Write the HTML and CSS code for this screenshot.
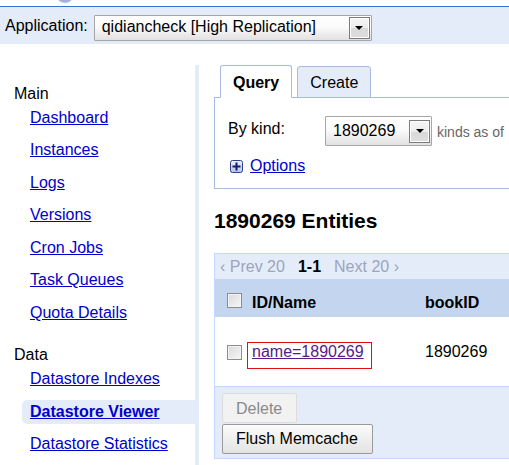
FILE: index.html
```html
<!DOCTYPE html>
<html>
<head>
<meta charset="utf-8">
<title>Datastore Viewer</title>
<link rel="stylesheet" href="styles.css">
</head>
<body>
<div class="topstrip">
  <svg class="logo" width="18" height="6" viewBox="0 0 18 6"><defs><radialGradient id="lg" cx="0.5" cy="0.2" r="0.7"><stop offset="0" stop-color="#4a5fae"/><stop offset="1" stop-color="#aab6dc"/></radialGradient></defs><ellipse cx="8" cy="-4" rx="8" ry="7" fill="url(#lg)"/></svg>
</div>
<div class="appbar">
  <span class="app-label">Application:</span>
  <div class="select app-select">
    <span class="select-text">qidiancheck [High Replication]</span>
    <span class="select-btn"><span class="arrow"></span></span>
  </div>
</div>
<div class="layout">
  <nav class="sidebar">
    <div class="nav-label">Main</div>
    <div class="nav-item"><div class="nav-box"><a href="#">Dashboard</a></div></div>
    <div class="nav-item"><div class="nav-box"><a href="#">Instances</a></div></div>
    <div class="nav-item"><div class="nav-box"><a href="#">Logs</a></div></div>
    <div class="nav-item"><div class="nav-box"><a href="#">Versions</a></div></div>
    <div class="nav-item"><div class="nav-box"><a href="#">Cron Jobs</a></div></div>
    <div class="nav-item"><div class="nav-box"><a href="#">Task Queues</a></div></div>
    <div class="nav-item"><div class="nav-box"><a href="#">Quota Details</a></div></div>
    <div class="nav-label nav-label-gap">Data</div>
    <div class="nav-item"><div class="nav-box"><a href="#">Datastore Indexes</a></div></div>
    <div class="nav-item"><div class="nav-box active"><a href="#">Datastore Viewer</a></div></div>
    <div class="nav-item"><div class="nav-box"><a href="#">Datastore Statistics</a></div></div>
  </nav>
  <main class="main">
    <div class="main-inner">
      <div class="tabs">
        <div class="tab tab-active">Query</div>
        <div class="tab">Create</div>
      </div>
      <div class="panel">
        <div class="kind-row">
          <span class="kind-label">By kind:</span>
          <div class="select kind-select">
            <span class="select-text">1890269</span>
            <span class="select-btn"><span class="arrow"></span></span>
          </div>
          <span class="kinds-note">kinds as of</span>
        </div>
        <div class="options-row">
          <svg class="plus" width="13" height="13" viewBox="0 0 13 13"><defs><linearGradient id="pg" x1="0" y1="0" x2="0" y2="1"><stop offset="0" stop-color="#eef0fb"/><stop offset="1" stop-color="#b9c2e6"/></linearGradient></defs><rect x="0.5" y="0.5" width="12" height="12" rx="2" fill="url(#pg)" stroke="#2b3f8c"/><path d="M2.5 6.5h8M6.5 2.5v8" stroke="#101f66" stroke-width="2"/></svg>
          <a href="#">Options</a>
        </div>
      </div>
      <h2 class="heading">1890269 Entities</h2>
      <div class="results">
        <div class="pager">
          <span>‹ Prev 20</span>
          <span class="pager-current">1-1</span>
          <span>Next 20 ›</span>
        </div>
        <div class="row row-head">
          <div class="cell-check"><span class="checkbox"></span></div>
          <div class="cell-name"><span class="head-text">ID/Name</span></div>
          <div class="cell-book"><span class="head-text">bookID</span></div>
        </div>
        <div class="row row-data">
          <div class="cell-check"><span class="checkbox checkbox-data"></span></div>
          <div class="cell-name"><span class="annot"><a class="visited" href="#">name=1890269</a></span></div>
          <div class="cell-book"><span class="data-text">1890269</span></div>
        </div>
        <div class="footer">
          <button class="btn btn-disabled" type="button">Delete</button>
          <button class="btn" type="button">Flush Memcache</button>
        </div>
      </div>
    </div>
  </main>
</div>
</body>
</html>
```

FILE: styles.css
```css
html, body {
  margin: 0;
  padding: 0;
}
body {
  width: 509px;
  height: 465px;
  overflow: hidden;
  font-family: "Liberation Sans", Arial, sans-serif;
  font-size: 16px;
  color: #000;
  background: #fff;
}
a {
  color: #0000cc;
  text-decoration: underline;
}

.topstrip {
  height: 6px;
  border-bottom: 1px solid #3b6fd3;
  padding-left: 57px;
  overflow: hidden;
}
.logo {
  display: block;
}

.appbar {
  height: 37px;
  box-sizing: border-box;
  background: #e5ecf9;
  padding: 8px 0 0 5px;
  display: flex;
  align-items: flex-start;
}
.app-label {
  margin-top: 2px;
  margin-right: 6px;
  line-height: 18px;
}

.select {
  display: flex;
  align-items: center;
  box-sizing: border-box;
  border: 1px solid #a6a6a6;
  border-radius: 1px;
  background: linear-gradient(#ffffff, #fbfbfb 45%, #e1e1e1);
  padding-left: 7px;
}
.select-text {
  flex: 1;
  line-height: 18px;
  white-space: nowrap;
}
.app-select {
  width: 278px;
  height: 26px;
}
.app-select .select-text {
  padding-bottom: 3px;
}
.kind-select {
  width: 107px;
  height: 30px;
}
.select-btn {
  width: 21px;
  height: 22px;
  margin-right: 1px;
  box-sizing: border-box;
  border: 1px solid #7b7b7b;
  box-shadow: inset 0 0 0 1px #fdfdfd;
  background: linear-gradient(#f6f6f6, #ececec 50%, #d9d9d9 52%, #dedede);
  display: flex;
  align-items: center;
  justify-content: center;
}
.kind-select .select-btn {
  height: 23px;
}
.arrow {
  width: 0;
  height: 0;
  border-left: 4px solid transparent;
  border-right: 4px solid transparent;
  border-top: 4px solid #000;
}

.layout {
  display: flex;
  margin-top: 21px;
  min-height: 400px;
}

.sidebar {
  width: 195px;
  flex-shrink: 0;
  border-right: 4px solid #e5ecf9;
  padding-top: 19.5px;
}
.nav-label {
  padding-left: 14px;
  line-height: 17px;
}
.nav-label-gap {
  margin-top: 17px;
}
.nav-item {
  height: 32.5px;
  display: flex;
  align-items: center;
  padding-left: 22px;
}
.nav-box {
  flex: 1;
  height: 24px;
  display: flex;
  align-items: center;
  padding-left: 8px;
  border-radius: 5px 0 0 5px;
}
.nav-box.active {
  background: #e5ecf9;
}
.nav-box.active a {
  font-weight: bold;
}

.main {
  flex: 1;
  min-width: 0;
  overflow: hidden;
  padding-left: 15px;
}
.main-inner {
  width: 420px;
}

.tabs {
  display: flex;
  align-items: flex-end;
  gap: 5px;
  padding-left: 6px;
}
.tab {
  border: 1px solid #a7bbdf;
  border-radius: 3px 3px 0 0;
  padding: 7px 12px 5px;
  line-height: 18px;
  background: #e5ecf9;
}
.tab-active {
  padding-top: 8px;
  background: #fff;
  border-bottom-color: #fff;
  font-weight: bold;
  position: relative;
  z-index: 1;
}

.panel {
  margin-top: -1px;
  border: 1px solid #a7bbdf;
  padding: 18px 0 13px 13px;
}
.kind-row {
  display: flex;
  align-items: flex-start;
}
.kind-label {
  width: 97px;
  margin-top: 4px;
  line-height: 18px;
}
.kinds-note {
  margin: 8px 0 0 5px;
  font-size: 14px;
  line-height: 16px;
  color: #666;
  white-space: nowrap;
}
.options-row {
  margin-top: 11px;
  padding-left: 2px;
  display: flex;
  align-items: center;
  gap: 7px;
  line-height: 18px;
}
.plus {
  display: block;
}

.heading {
  margin: 20px 0 0;
  font-size: 21px;
  line-height: 24px;
  font-weight: bold;
}

.results {
  margin-top: 20px;
  border-left: 1px solid #c3d9ff;
}
.pager {
  display: flex;
  gap: 13px;
  background: #e5ecf9;
  border-top: 1px solid #c3d9ff;
  padding: 4px 0 3px 5px;
  line-height: 18px;
  color: #9ba5bc;
  white-space: nowrap;
}
.pager-current {
  color: #000;
  font-weight: bold;
}

.row {
  display: flex;
  align-items: flex-start;
}
.row-head {
  height: 38px;
  box-sizing: border-box;
  padding-top: 14px;
  background: #c4d6ef;
  font-weight: bold;
}
.row-data {
  height: 69px;
  box-sizing: border-box;
  padding-top: 25px;
  background: #fff;
}
.cell-check {
  width: 32px;
  flex-shrink: 0;
  box-sizing: border-box;
  padding-left: 12px;
  display: flex;
}
.cell-name {
  width: 178px;
  flex-shrink: 0;
}
.cell-book {
  flex: 1;
}
.head-text {
  display: block;
  margin-top: 1px;
  line-height: 18px;
}
.cell-name .head-text {
  padding-left: 5px;
}
.data-text {
  display: block;
  margin-top: 1px;
  line-height: 18px;
}
.checkbox {
  display: block;
  width: 15px;
  height: 15px;
  box-sizing: border-box;
  border: 1px solid #8c8c8c;
  background: linear-gradient(135deg, #dadada, #f6f6f6);
  box-shadow: inset 0 0 0 1px #f4f4f4;
}
.checkbox-data {
  margin-top: 3px;
}
.annot {
  display: inline-block;
  border: 1px solid #e01010;
  padding: 0 7px 7px 4px;
  line-height: 18px;
}
a.visited {
  color: #551a8b;
}

.footer {
  display: flex;
  flex-direction: column;
  align-items: flex-start;
  gap: 1px;
  background: #e5ecf9;
  border-top: 1px solid #c3d9ff;
  border-bottom: 1px solid #c3d9ff;
  padding: 6px 0 4px 7px;
}
.btn {
  height: 30px;
  box-sizing: border-box;
  margin: 0;
  padding: 0 14px 0 13px;
  border: 1px solid #9a9a9a;
  border-radius: 2px;
  background: linear-gradient(#fbfbfb, #e3e3e3);
  font-family: inherit;
  font-size: 16px;
  line-height: 18px;
  color: #000;
  white-space: nowrap;
}
.btn-disabled {
  padding-top: 2px;
  color: #8a8a8a;
  background: #f2f2f2;
  border-color: #dcdcdc;
}
```
